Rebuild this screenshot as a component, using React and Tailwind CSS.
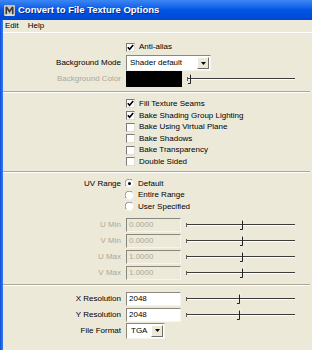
import React from "react";

const font = { fontFamily: '"Liberation Sans", Arial, sans-serif' };

function Check({ on }) {
  return (
    <div className="w-[9px] h-[9px] bg-white border border-t-[#7a7a7a] border-l-[#7a7a7a] border-b-[#e0ded2] border-r-[#e0ded2] flex items-center justify-center">
      {on && (
        <svg width="7" height="7" viewBox="0 0 7 7">
          <path d="M0.8 3.2 L2.6 5.2 L6.2 1" fill="none" stroke="#000" strokeWidth="1.6" />
        </svg>
      )}
    </div>
  );
}

function Radio({ on }) {
  return (
    <svg width="9" height="9" viewBox="0 0 9 9">
      <circle cx="4.5" cy="4.5" r="4" fill="#fff" />
      <path d="M1.3 7.2 A4 4 0 0 1 7.2 1.3" fill="none" stroke="#808080" strokeWidth="1" />
      <path d="M7.2 1.3 A4 4 0 0 1 1.3 7.2" fill="none" stroke="#f4f2e8" strokeWidth="1" />
      {on && <circle cx="4.5" cy="4.5" r="1.5" fill="#000" />}
    </svg>
  );
}

function Slider({ w = 109, pos }) {
  return (
    <svg width={w} height="12" viewBox={`0 0 ${w} 12`}>
      <line x1="0" y1="5.5" x2={w} y2="5.5" stroke="#3c3c3c" strokeWidth="1" />
      <line x1="1" y1="6.5" x2={w} y2="6.5" stroke="#ffffff" strokeWidth="1" />
      <line x1="0.5" y1="4" x2="0.5" y2="8" stroke="#5a5a5a" strokeWidth="1" />
      <path d={`M${pos + 2.5} 1 V10.5 H${pos}`} fill="none" stroke="#222" strokeWidth="1" />
      <line x1={pos + 2.5} y1="1.5" x2={pos + 4} y2="1.5" stroke="#fff" strokeWidth="1" />
    </svg>
  );
}

function Arrow() {
  return (
    <div className="w-[12px] h-[12px] bg-[#ece9d8] border border-t-white border-l-white border-b-[#6f6d65] border-r-[#6f6d65] flex items-center justify-center">
      <svg width="5" height="3" viewBox="0 0 5 3">
        <path d="M0 0 H5 L2.5 3 Z" fill="#000" />
      </svg>
    </div>
  );
}

function Label({ children, dim }) {
  return (
    <div className={`w-[118px] text-right ${dim ? "text-[#aca899]" : "text-black"}`}>{children}</div>
  );
}

function Field({ value, dim }) {
  return (
    <div
      className={`ml-[5px] w-[55px] h-[14px] border border-t-[#8a887e] border-l-[#8a887e] border-b-[#f5f4ee] border-r-[#f5f4ee] flex items-center pl-[2px] ${
        dim ? "bg-[#ece9d8] text-[#aca899]" : "bg-white text-black"
      }`}
    >
      {value}
    </div>
  );
}

function Sep() {
  return (
    <div className="mr-[2px]">
      <div className="h-px bg-[#aca899]" />
      <div className="h-px bg-white" />
    </div>
  );
}

export default function App() {
  const checks = [
    ["Fill Texture Seams", true],
    ["Bake Shading Group Lighting", true],
    ["Bake Using Virtual Plane", false],
    ["Bake Shadows", false],
    ["Bake Transparency", false],
    ["Double Sided", false],
  ];
  const radios = [
    ["Default", true],
    ["Entire Range", false],
    ["User Specified", false],
  ];
  const ranges = [
    ["U Min", "0.0000"],
    ["V Min", "0.0000"],
    ["U Max", "1.0000"],
    ["V Max", "1.0000"],
  ];

  return (
    <div className="w-[312px] h-[350px] overflow-hidden bg-[#ece9d8] flex flex-col text-[8px] leading-none" style={font}>
      <div className="h-[20px] shrink-0 flex items-center pl-[4px] bg-gradient-to-b from-[#3d86f4] via-[#0055e5] to-[#0046cf]">
        <svg width="11" height="11" viewBox="0 0 11 11">
          <rect x="0" y="0" width="11" height="11" rx="1" fill="#c9c6bb" />
          <path d="M1.5 9.5 V2 L3 1.5 L5.5 5 L8 1.5 L9.5 2 V9.5 H8 V4.5 L5.5 8 L3 4.5 V9.5 Z" fill="#3a3a3a" />
          <path d="M1 10 H10" stroke="#ffffff" strokeWidth="0.8" />
        </svg>
        <span className="ml-[3px] text-white font-bold text-[9.5px] [text-shadow:1px_1px_0_#0a2a8a]">
          Convert to File Texture Options
        </span>
      </div>
      <div className="flex flex-1">
        <div className="w-[3px] shrink-0 bg-gradient-to-r from-[#0a4fd8] to-[#3a7cf0]" />
        <div className="flex-1 flex flex-col">
          <div className="h-[13px] flex items-center gap-[9px] pl-[2px] border-b border-white">
            <span>Edit</span>
            <span>Help</span>
          </div>

          <div className="h-[12px] mt-[8px] flex items-center pl-[123px] gap-[4px]">
            <Check on />
            <span>Anti-alias</span>
          </div>
          <div className="h-[16px] mt-[2px] flex items-center">
            <Label>Background Mode</Label>
            <div className="ml-[5px] w-[85px] h-[16px] bg-white border border-t-[#8a887e] border-l-[#8a887e] border-b-[#f5f4ee] border-r-[#f5f4ee] flex items-center justify-between pl-[3px] pr-[1px]">
              <span>Shader default</span>
              <Arrow />
            </div>
          </div>
          <div className="h-[16px] flex items-center">
            <Label dim>Background Color</Label>
            <div className="ml-[5px] w-[56px] h-[16px] bg-black" />
            <div className="ml-[5px]">
              <Slider w={108} pos={1} />
            </div>
          </div>

          <div className="mt-[4px]">
            <Sep />
          </div>

          <div className="pt-[5.2px] flex flex-col">
            {checks.map(([t, on]) => (
              <div key={t} className="h-[11.6px] flex items-center pl-[123px] gap-[4px]">
                <Check on={on} />
                <span>{t}</span>
              </div>
            ))}
          </div>

          <div className="mt-[3px]">
            <Sep />
          </div>

          <div className="pt-[5px] flex flex-col">
            {radios.map(([t, on], i) => (
              <div key={t} className="h-[11.5px] flex items-center">
                <Label>{i === 0 ? "UV Range" : ""}</Label>
                <div className="ml-[4px] flex items-center gap-[4px]">
                  <Radio on={on} />
                  <span>{t}</span>
                </div>
              </div>
            ))}
          </div>

          <div className="mt-[4.5px] flex flex-col">
            {ranges.map(([t, v]) => (
              <div key={t} className="h-[16px] flex items-center">
                <Label dim>{t}</Label>
                <Field value={v} dim />
                <div className="ml-[5px]">
                  <Slider pos={54} />
                </div>
              </div>
            ))}
          </div>

          <div className="mt-[3px]">
            <Sep />
          </div>

          <div className="pt-[5px] flex flex-col">
            {["X Resolution", "Y Resolution"].map((t) => (
              <div key={t} className="h-[16px] flex items-center">
                <Label>{t}</Label>
                <Field value="2048" />
                <div className="ml-[5px]">
                  <Slider pos={51} />
                </div>
              </div>
            ))}
            <div className="h-[16px] flex items-center">
              <Label>File Format</Label>
              <div className="ml-[5px] w-[39px] h-[16px] bg-white border border-t-[#8a887e] border-l-[#8a887e] border-b-[#f5f4ee] border-r-[#f5f4ee] flex items-center justify-between pl-[4px] pr-[1px]">
                <span>TGA</span>
                <Arrow />
              </div>
            </div>
          </div>
        </div>
      </div>
    </div>
  );
}
